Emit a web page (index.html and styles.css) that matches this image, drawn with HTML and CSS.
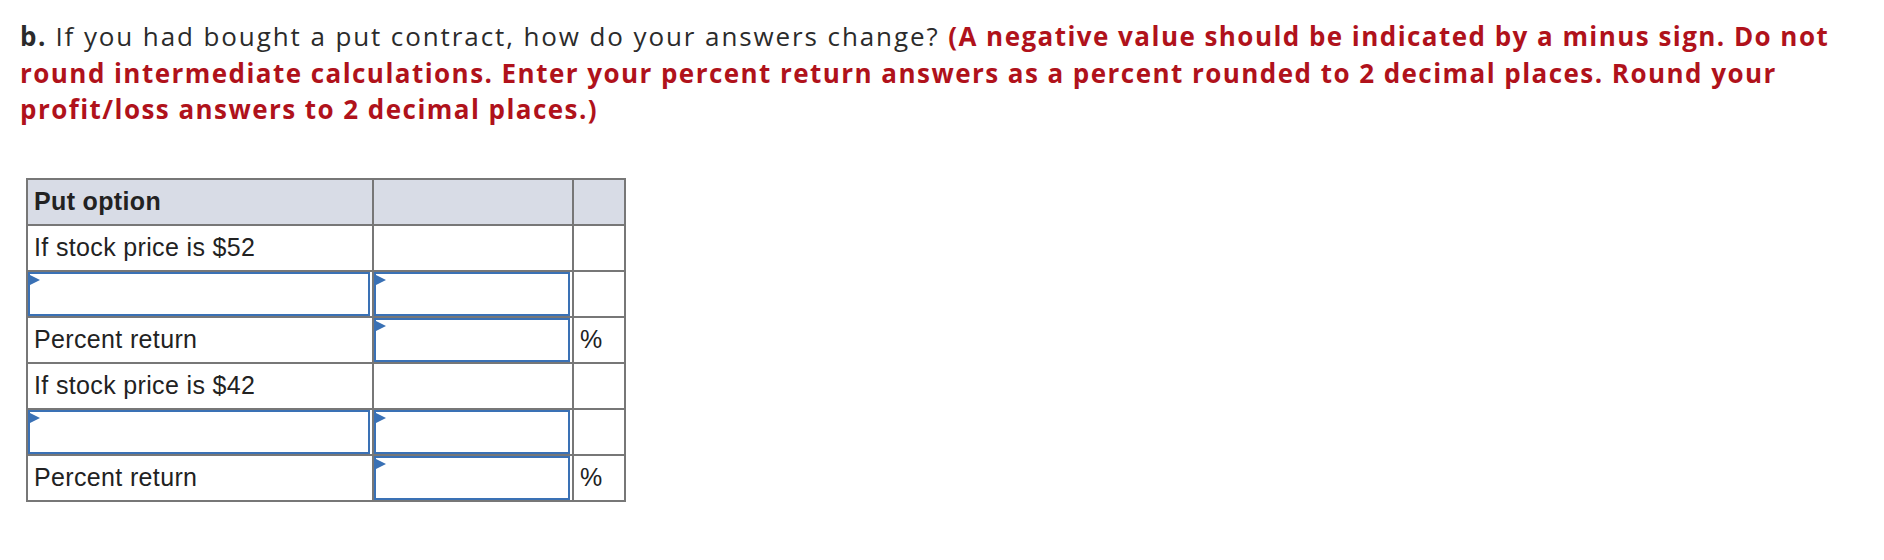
FILE: index.html
```html
<!DOCTYPE html>
<html lang="en">
<head>
<meta charset="utf-8">
<title>Put option</title>
<link rel="stylesheet" href="styles.css">
</head>
<body>
<div class="page">
  <p class="prompt"><b class="part">b.</b> If you had bought a put contract, how do your answers change? <strong class="note">(A negative value should be indicated by a minus sign. Do not round intermediate calculations. Enter your percent return answers as a percent rounded to 2 decimal places. Round your profit/loss answers to 2 decimal places.)</strong></p>

  <table class="grid">
    <tr class="head">
      <th class="c1">Put option</th>
      <th class="c2"></th>
      <th class="c3"></th>
    </tr>
    <tr>
      <td class="label">If stock price is $52</td>
      <td></td>
      <td></td>
    </tr>
    <tr>
      <td class="in"><div class="field"><input type="text"></div></td>
      <td class="in"><div class="field"><input type="text"></div></td>
      <td></td>
    </tr>
    <tr>
      <td class="label">Percent return</td>
      <td class="in"><div class="field"><input type="text"></div></td>
      <td class="label">%</td>
    </tr>
    <tr>
      <td class="label">If stock price is $42</td>
      <td></td>
      <td></td>
    </tr>
    <tr>
      <td class="in"><div class="field"><input type="text"></div></td>
      <td class="in"><div class="field"><input type="text"></div></td>
      <td></td>
    </tr>
    <tr>
      <td class="label">Percent return</td>
      <td class="in"><div class="field"><input type="text"></div></td>
      <td class="label">%</td>
    </tr>
  </table>
</div>
</body>
</html>
```

FILE: styles.css
```css
html, body {
  margin: 0;
  padding: 0;
  background: #ffffff;
}

.page {
  padding: 18px 20px 0 20px;
}

.prompt {
  margin: 0;
  max-width: 1842px;
  font-family: "Open Sans", Lato, sans-serif;
  font-size: 26px;
  line-height: 36.5px;
  letter-spacing: 1.9px;
  color: #2b2b2b;
}

.part {
  font-weight: 700;
  letter-spacing: 1.45px;
}

.note {
  font-weight: 700;
  letter-spacing: 1.45px;
  color: #b0121b;
}

.grid {
  margin: 50px 0 0 6px;
  border-collapse: separate;
  border-spacing: 0;
  table-layout: fixed;
  width: 600px;
  border-top: 2px solid #777777;
  border-left: 2px solid #777777;
  font-family: "Liberation Sans", Arial, sans-serif;
  font-size: 25px;
  letter-spacing: 0.35px;
  color: #222222;
}

.grid th,
.grid td {
  box-sizing: border-box;
  height: 46px;
  padding: 0 6px;
  border-right: 2px solid #777777;
  border-bottom: 2px solid #777777;
  text-align: left;
  vertical-align: middle;
  white-space: nowrap;
}

.grid .c1 { width: 346px; }
.grid .c2 { width: 200px; }
.grid .c3 { width: 52px; }

.head th {
  background: #d8dce6;
  font-weight: 700;
}

.grid td.in {
  padding: 0 2px 0 0;
}

.field {
  position: relative;
  height: 44px;
}

.field input {
  display: block;
  box-sizing: border-box;
  width: 100%;
  height: 44px;
  margin: 0;
  padding: 0 8px;
  border: 2px solid #3a71b5;
  border-radius: 0;
  background: #ffffff;
  font: inherit;
  outline: none;
}

.field::before {
  content: "";
  position: absolute;
  top: 3px;
  left: 2px;
  width: 0;
  height: 0;
  border-left: 10px solid #3a71b5;
  border-top: 5px solid transparent;
  border-bottom: 5px solid transparent;
}
```
